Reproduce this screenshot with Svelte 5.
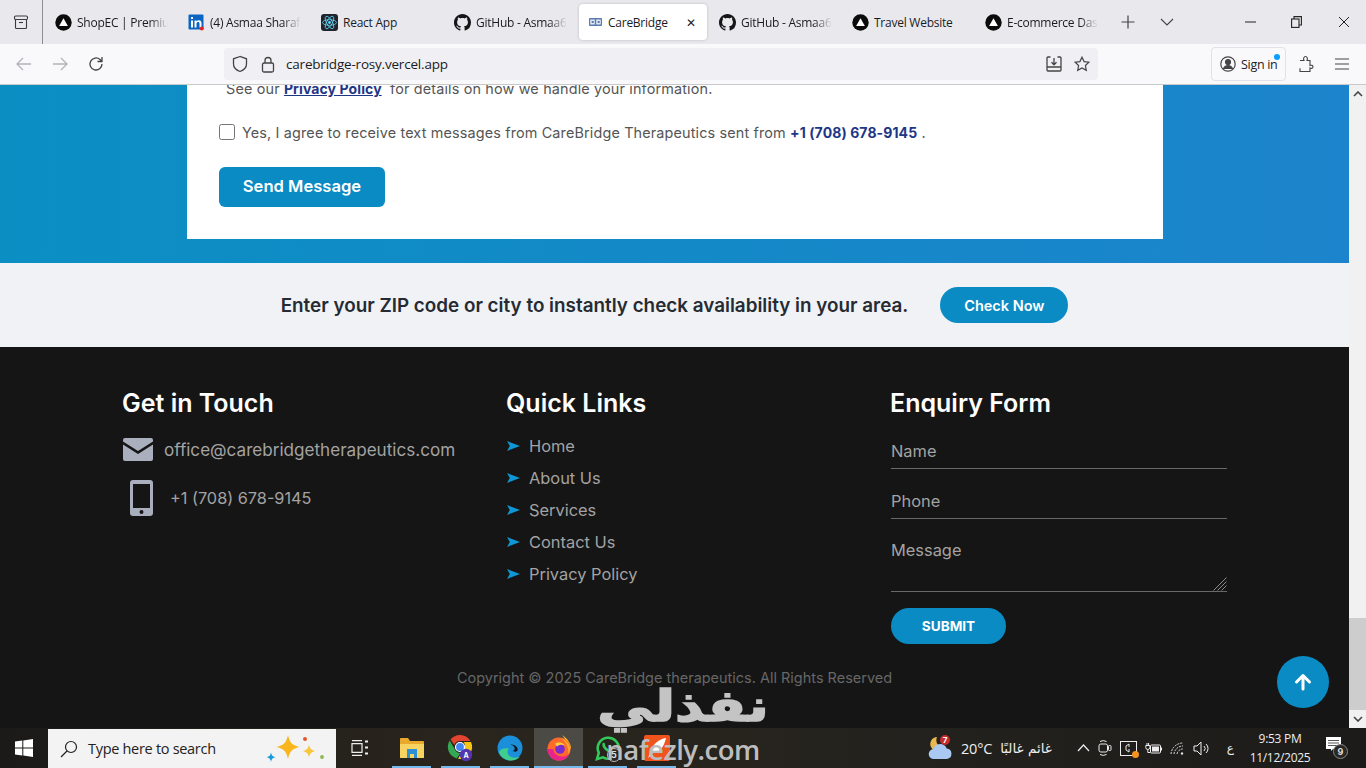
<script>
  const tabs = [
    { t: 'ShopEC | Premium', i: 'tri' },
    { t: '(4) Asmaa Sharaf', i: 'in' },
    { t: 'React App', i: 'react', nofade: true },
    { t: 'GitHub - Asmaa6', i: 'gh' },
    { t: 'CareBridge', i: 'cb', active: true, nofade: true },
    { t: 'GitHub - Asmaa6', i: 'gh' },
    { t: 'Travel Website', i: 'tri', nofade: true },
    { t: 'E-commerce Dash', i: 'tri' }
  ];
  const links = ['Home', 'About Us', 'Services', 'Contact Us', 'Privacy Policy'];
</script>

<div class="screen">
  <header class="tabbar">
    <div class="tabhome">
      <svg width="16" height="16" viewBox="0 0 16 16" fill="none" stroke="#3a3a3f" stroke-width="1.100"><path d="M2.500 5.500V13.500a1 1 0 0 0 1 1h9a1 1 0 0 0 1-1V5.500"/><rect x="1.500" y="2" width="13" height="3.500" rx="1.200"/><path d="M6 8.500h4"/></svg>
    </div>
    <div class="tabs">
      {#each tabs as tab}
        <div class="tab" class:active={tab.active}>
          <span class="favicon">
            {#if tab.i === 'tri'}
              <svg width="17" height="17" viewBox="0 0 17 17"><circle cx="8.500" cy="8.500" r="8.200" fill="#0b0b0b"/><path d="M8.500 4.300l4.400 7.600H4.100z" fill="#fff"/></svg>
            {:else if tab.i === 'in'}
              <svg width="17" height="17" viewBox="0 0 17 17"><rect x=".5" y=".5" width="15" height="15" rx="1" fill="#0a66c2"/><path d="M3 6.500h2v7H3zM3 3h2v2H3zM6.500 6.500h2v1c.5-.8 1.300-1.200 2.300-1.200 1.800 0 2.700 1.100 2.700 3v4.200h-2V9.700c0-1-.4-1.600-1.300-1.600-1 0-1.700.6-1.700 1.800v3.600h-2z" fill="#fff"/><circle cx="13.800" cy="14.500" r="2" fill="#e0252a"/></svg>
            {:else if tab.i === 'react'}
              <svg width="17" height="17" viewBox="0 0 17 17"><rect width="17" height="17" rx="3" fill="#20232a"/><g fill="none" stroke="#61dafb" stroke-width=".8"><ellipse cx="8.500" cy="8.500" rx="7" ry="2.800"/><ellipse cx="8.500" cy="8.500" rx="7" ry="2.800" transform="rotate(60 8.500 8.500)"/><ellipse cx="8.500" cy="8.500" rx="7" ry="2.800" transform="rotate(120 8.500 8.500)"/></g><circle cx="8.500" cy="8.500" r="1.400" fill="#61dafb"/></svg>
            {:else if tab.i === 'gh'}
              <svg width="17" height="17" viewBox="0 0 16 16"><path fill="#161616" d="M8 0C3.580 0 0 3.580 0 8c0 3.540 2.290 6.530 5.470 7.590.4.070.55-.17.55-.38 0-.19-.01-.82-.01-1.490-2.010.37-2.530-.49-2.690-.94-.09-.23-.48-.94-.82-1.130-.28-.15-.68-.52-.01-.53.63-.01 1.080.58 1.230.82.720 1.210 1.870.87 2.330.66.070-.52.280-.87.510-1.070-1.780-.2-3.640-.89-3.640-3.950 0-.87.310-1.590.820-2.150-.08-.2-.36-1.020.08-2.120 0 0 .67-.21 2.200.82.640-.18 1.320-.27 2-.27s1.360.09 2 .27c1.530-1.040 2.200-.82 2.200-.82.440 1.100.160 1.920.080 2.120.510.560.820 1.270.820 2.150 0 3.070-1.870 3.750-3.650 3.950.290.250.540.730.540 1.480 0 1.070-.01 1.930-.01 2.200 0 .210.150.460.550.380A8.010 8.010 0 0 0 16 8c0-4.420-3.580-8-8-8z"/></svg>
            {:else}
              <svg width="13" height="8" viewBox="0 0 13 8"><rect width="13" height="8" rx=".8" fill="#5b7cb2"/><rect x="1.200" y="1.500" width="4.600" height="5" fill="#dfe8f4"/><rect x="7.200" y="1.500" width="4.600" height="5" fill="#dfe8f4"/><rect x="2.700" y="3" width="2" height="2" fill="#5b7cb2"/><rect x="8.700" y="3" width="2" height="2" fill="#5b7cb2"/></svg>
            {/if}
          </span>
          <span class="tabtitle" class:fade={!tab.nofade}>{tab.t}</span>
          {#if tab.active}<span class="tabclose">✕</span>{/if}
        </div>
      {/each}
      <span class="newtab">
        <svg width="14" height="14" viewBox="0 0 14 14" stroke="#444" stroke-width="1.200"><path d="M7 .5v13M.5 7h13"/></svg>
      </span>
      <span class="tablist">
        <svg width="14" height="8" viewBox="0 0 14 8" fill="none" stroke="#444" stroke-width="1.100"><path d="M1 1l6 6 6-6"/></svg>
      </span>
    </div>
    <div class="winctl">
      <span><svg width="11" height="2" viewBox="0 0 11 2" stroke="#222"><path d="M0 1h11"/></svg></span>
      <span><svg width="11" height="12" viewBox="0 0 11 12" fill="none" stroke="#222" stroke-width="1.100"><rect x=".6" y="3" width="7.400" height="8.400"/><path d="M3 3V.6h7.400v8.400H8"/></svg></span>
      <span><svg width="12" height="12" viewBox="0 0 12 12" stroke="#222" stroke-width="1"><path d="M1 1l10 10M11 1L1 11"/></svg></span>
    </div>
  </header>

  <nav class="navbar">
    <div class="navbtns">
      <svg width="16" height="14" viewBox="0 0 16 14" fill="none" stroke="#b3b3b8" stroke-width="1.300"><path d="M15 7H1.500M7 1L1 7l6 6"/></svg>
      <svg width="16" height="14" viewBox="0 0 16 14" fill="none" stroke="#b3b3b8" stroke-width="1.300"><path d="M1 7h13.500M9 1l6 6-6 6"/></svg>
      <svg width="16" height="16" viewBox="0 0 16 16" fill="none" stroke="#444" stroke-width="1.300"><path d="M14 8a6 6 0 1 1-2-4.500L14 5.500M14 1v4.500H9.500"/></svg>
    </div>
    <div class="urlbar">
      <svg width="16" height="18" viewBox="0 0 16 18" fill="none" stroke="#444" stroke-width="1.300"><path d="M8 1.500L1.500 3.800V9c0 3.500 3 6.200 6.500 7.500 3.500-1.300 6.500-4 6.500-7.500V3.800z"/></svg>
      <svg class="lock" width="14" height="17" viewBox="0 0 14 17" fill="none" stroke="#444" stroke-width="1.300"><rect x="1.500" y="7" width="11" height="9" rx="1.500"/><path d="M4 7V4.500a3 3 0 0 1 6 0V7"/></svg>
      <span class="url">carebridge-rosy.vercel.app</span>
      <svg class="urlright" width="16" height="16" viewBox="0 0 16 16" fill="none" stroke="#444" stroke-width="1.300"><path d="M4.500 1H2a1 1 0 0 0-1 1v12a1 1 0 0 0 1 1h12a1 1 0 0 0 1-1V2a1 1 0 0 0-1-1h-2.500M1 11h14M8 2v6.500M5.500 6.300L8 8.800l2.500-2.500"/></svg>
      <svg class="star" width="16" height="16" viewBox="0 0 16 16" fill="none" stroke="#444" stroke-width="1.200"><path d="M8 1.200l2.100 4.400 4.800.6-3.500 3.300.9 4.800L8 12l-4.300 2.300.9-4.800L1.100 6.200l4.800-.6z"/></svg>
    </div>
    <div class="signin">
      <svg width="16" height="16" viewBox="0 0 16 16" fill="none" stroke="#444" stroke-width="1.200"><circle cx="8" cy="8" r="7.200"/><circle cx="8" cy="6" r="2.500" fill="#444"/><path d="M3.500 13c.8-2.500 2.500-3.300 4.500-3.300s3.700.8 4.500 3.300" fill="#444"/></svg>
      <span>Sign in</span>
      <i class="dot"></i>
    </div>
    <svg class="ext" width="15" height="18" viewBox="0 0 15 18" fill="none" stroke="#444" stroke-width="1.100"><path d="M1 5.500h4c-1-1.800-.2-4 1.500-4s2.500 2.200 1.500 4h3v5c1.500-.6 3-.2 3 1.300s-1.500 2-3 1.200v3.500H1v-3.300"/></svg>
    <svg class="burger" width="14" height="12" viewBox="0 0 14 12" stroke="#444" stroke-width="1.200"><path d="M0 1h14M0 6h14M0 11h14"/></svg>
  </nav>

  <div class="viewport">
    <main class="page">
      <section class="hero">
        <div class="card">
          <p class="consent">See our <a href="#top">Privacy Policy</a>&nbsp; for details on how we handle your information.</p>
          <label class="agree">
            <input type="checkbox" />
            <span>Yes, I agree to receive text messages from CareBridge Therapeutics sent from <b>+1 (708) 678-9145</b> .</span>
          </label>
          <button class="send">Send Message</button>
        </div>
      </section>

      <section class="zip">
        <h2>Enter your ZIP code or city to instantly check availability in your area.</h2>
        <button class="check">Check Now</button>
      </section>

      <footer class="footer">
        <div class="cols">
          <div>
            <h3>Get in Touch</h3>
            <div class="contact mail">
              <svg width="30" height="23" viewBox="0 0 30 23"><path fill="#a9afbd" d="M2 0h26a2 2 0 0 1 2 2v1.500L15 13 0 3.500V2a2 2 0 0 1 2-2zM0 6.500l15 9.500 15-9.500V21a2 2 0 0 1-2 2H2a2 2 0 0 1-2-2z"/></svg>
              <span>office@carebridgetherapeutics.com</span>
            </div>
            <div class="contact phone">
              <svg width="23" height="36" viewBox="0 0 23 36"><path fill="#a9afbd" fill-rule="evenodd" d="M3 0h17a3 3 0 0 1 3 3v30a3 3 0 0 1-3 3H3a3 3 0 0 1-3-3V3a3 3 0 0 1 3-3zm0 4v24h17V4zm8.500 26a2 2 0 1 0 0 4 2 2 0 0 0 0-4z"/></svg>
              <span>+1 (708) 678-9145</span>
            </div>
          </div>
          <div>
            <h3>Quick Links</h3>
            <ul class="links">
              {#each links as l}
                <li>
                  <svg width="13" height="10" viewBox="0 0 13 10"><path fill="#0e97d6" d="M0 0l13 5L0 10l2.800-5z"/></svg>
                  <span>{l}</span>
                </li>
              {/each}
            </ul>
          </div>
          <form class="enquiry">
            <h3>Enquiry Form</h3>
            <input placeholder="Name" />
            <input placeholder="Phone" />
            <div class="msgwrap">
              <textarea placeholder="Message"></textarea>
              <svg class="grip" width="14" height="14" viewBox="0 0 14 14" stroke="#9a9a9a" stroke-width=".9"><path d="M13.500 .5L.5 13.500M13.500 4.500L4.500 13.500M13.500 8.500L8.500 13.500"/></svg>
            </div>
            <button type="button" class="submit">SUBMIT</button>
          </form>
        </div>
        <p class="copy">Copyright © 2025 CareBridge therapeutics. All Rights Reserved</p>
      </footer>
    </main>
    <div class="scrollbar">
      <span class="sbtn"><svg width="10" height="6" viewBox="0 0 10 6" fill="none" stroke="#444" stroke-width="1.600"><path d="M1 5l4-4 4 4"/></svg></span>
      <span class="sthumb"></span>
      <span class="sbtn"><svg width="10" height="6" viewBox="0 0 10 6" fill="none" stroke="#444" stroke-width="1.600"><path d="M1 1l4 4 4-4"/></svg></span>
    </div>
    <button class="totop" aria-label="Back to top">
      <svg width="18" height="18" viewBox="0 0 18 18" fill="none" stroke="#fff" stroke-width="3" stroke-linecap="round" stroke-linejoin="round"><path d="M9 16V2.500M2.500 9L9 2.500 15.500 9"/></svg>
    </button>
  </div>

  <div class="taskbar">
    <span class="start">
      <svg width="18" height="18" viewBox="0 0 18 18" fill="#fff"><path d="M0 2.600l7.300-1v7H0zM8.300 1.400L18 0v8.600H8.300zM0 9.600h7.300v7l-7.300-1zM8.300 9.600H18V18l-9.700-1.400z"/></svg>
    </span>
    <div class="search">
      <svg width="18" height="18" viewBox="0 0 18 18" fill="none" stroke="#222" stroke-width="1.200"><circle cx="11" cy="7" r="5.500"/><path d="M7 11l-6 6"/></svg>
      <span>Type here to search</span>
      <svg class="sparkle" width="62" height="30" viewBox="0 0 62 30"><path fill="#f9b61c" d="M24 1c1.800 8 4.500 10.500 12 12-7.500 1.500-10.200 4-12 12-1.800-8-4.500-10.500-12-12 7.500-1.500 10.200-4 12-12z"/><path fill="#f9c53c" d="M45 10.500c.8 4 2.200 5.500 6 6.500-3.800 1-5.200 2.500-6 6.500-.8-4-2.200-5.500-6-6.500 3.800-1 5.200-2.500 6-6.500z"/><circle cx="41" cy="5" r="2" fill="#e0592a"/><circle cx="58" cy="23" r="1.900" fill="#8ab84a"/><path fill="#1a9bdc" d="M7 18.500c.5 2.900 1.600 4 4.400 4.700-2.800.7-3.900 1.800-4.400 4.700-.5-2.900-1.600-4-4.400-4.700 2.800-.7 3.900-1.800 4.400-4.700z"/></svg>
    </div>
    <span class="taskview">
      <svg width="18" height="16" viewBox="0 0 18 16" fill="none" stroke="#eee" stroke-width="1.200"><path d="M1 .6h10M1 15.400h10M1 3.600h10v8.800H1z"/><path d="M14 1.500h3M14 7.500h3M14 13.500h3" stroke-width="2"/></svg>
    </span>
    <div class="apps">
      <span class="app running">
        <svg width="24" height="22" viewBox="0 0 24 22"><path fill="#e8a92c" d="M0 2a1 1 0 0 1 1-1h7l2 3h13a1 1 0 0 1 1 1v15a1 1 0 0 1-1 1H1a1 1 0 0 1-1-1z"/><path fill="#f7d460" d="M0 7h24v13a1 1 0 0 1-1 1H1a1 1 0 0 1-1-1z"/><path fill="#2d8fd5" d="M7 12h10v9h-3v-4h-4v4H7z"/></svg>
      </span>
      <span class="app running">
        <svg width="28" height="28" viewBox="0 0 28 28"><path fill="#e2452f" d="M13 1a12 12 0 0 1 10.400 6H13a6 6 0 0 0-5.700 4L3.500 5.500A12 12 0 0 1 13 1z"/><path fill="#34a853" d="M2.700 6.500l5.200 9a6 6 0 0 0 5.500 3.500L9.700 24.500A12 12 0 0 1 2.700 6.500z"/><path fill="#f9c513" d="M24 8a12 12 0 0 1-13 16.800l5.200-9A6 6 0 0 0 16.500 8z"/><circle cx="13" cy="13" r="4.500" fill="#4285f4" stroke="#fff" stroke-width="1.200"/><circle cx="19" cy="21" r="6.200" fill="#5236ab"/><text x="19" y="24" text-anchor="middle" class="badge-a">A</text></svg>
      </span>
      <span class="app running">
        <svg width="26" height="26" viewBox="0 0 26 26"><circle cx="13" cy="13" r="12.500" fill="#1b8fd9"/><path fill="#3fce8e" d="M2 17c2 6 7 8.500 12 8.500 4 0 7-1.500 9-4-3 1.500-8 2-11-1-2-2-2-5 0-7-5-1-9 .5-10 3.500z"/><path fill="#131517" d="M13.500 9.500c4 0 7.200 2.200 7.200 5 0 1.300-1 2.200-2.500 2.200-1 0-2-.4-2.500-.9 3 0 3-5-2.200-6.300z"/></svg>
      </span>
      <span class="app running current">
        <svg width="26" height="26" viewBox="0 0 26 26"><path fill="#ffbd2e" d="M16 0c5 3 9.500 8.500 9 15-1-3-3-5-5-6.500.3-3-1.700-6-4-8.500z"/><circle cx="13" cy="14" r="11.500" fill="#ff6a2a"/><path fill="#ffa92b" d="M15 3c5 2 9 6 9 11 0 2-.6 4-1.700 5.500C23 12 20 7 15 3z"/><path fill="#e8238a" d="M1.600 14c0 7 5.400 11.500 11.400 11.500 4.600 0 8.500-2.500 10.300-6.500-3 2.600-7.300 3.300-11 1.800-3-1.300-5-3.800-5-6.800z"/><circle cx="14" cy="14" r="4.800" fill="#7a2bd0"/><path fill="#ffcf3a" d="M9 9c3-2.500 8-1.500 10 1.500-3-1.300-6-1-8 1z"/></svg>
      </span>
      <span class="app running">
        <svg width="28" height="28" viewBox="0 0 28 28" fill="none" stroke="#33c95a" stroke-width="2.600"><path d="M3 25l1.800-6.200A10.500 10.500 0 1 1 9 23.300z"/><path d="M10 9c-1 2 0 4 2 6s4 3 6 2" stroke-width="2.600"/></svg>
        <i class="appbadge">5</i>
      </span>
      <span class="app running">
        <svg width="26" height="26" viewBox="0 0 26 26"><rect width="26" height="26" rx="2" fill="#f0531c"/><path fill="#fff" d="M22 3c-7 1-13 6-15 13l-3 7 5-5c7-1 11-6 13-15z"/></svg>
      </span>
    </div>
    <div class="tray">
      <span class="weather">
        <svg width="26" height="26" viewBox="0 0 26 26"><path fill="#e9b94f" d="M9 2a7 7 0 1 0 6 11A8 8 0 0 1 9 2z"/><path fill="#a9c8f2" d="M6 24a5 5 0 0 1-.6-10 7 7 0 0 1 13.300-.5A5.300 5.300 0 0 1 19 24z"/><circle cx="17" cy="5" r="5" fill="#c42b2b"/><text x="17" y="8" text-anchor="middle" class="badge-7">7</text></svg>
        <b>20°C</b>
        <span class="ar" dir="rtl">غائم غالبًا</span>
      </span>
      <svg class="caret" width="13" height="8" viewBox="0 0 13 8" fill="none" stroke="#eee" stroke-width="1.200"><path d="M1 7l5.500-6L12 7"/></svg>
      <svg width="14" height="18" viewBox="0 0 14 18" fill="none" stroke="#eee" stroke-width="1"><rect x="1" y="5" width="8.500" height="8" rx="1.800"/><rect x="10.500" y="6.500" width="2.500" height="5" rx=".8"/><path d="M2 2.500q3.200-1.800 6.500 0M2 15.500q3.200 1.800 6.500 0"/></svg>
      <span class="pic">
        <svg width="17" height="15" viewBox="0 0 17 15" fill="none" stroke="#eee" stroke-width="1"><rect x=".5" y=".5" width="16" height="14"/><path d="M6 5l3-2M9 3v3M6 5v4M6 9l3 2M9 11V8"/></svg>
        <i></i>
      </span>
      <svg width="17" height="13" viewBox="0 0 17 13" fill="none" stroke="#eee" stroke-width="1"><rect x="5.500" y="3" width="10" height="8" rx="1"/><path d="M16.500 5.500v3" /><path d="M.8 3.500h4v2a2 2 0 0 1-4 0zM2 1v2.500M3.600 1v2.500M2.800 7.500v3h2.500"/><rect x="7" y="4.500" width="7" height="5" fill="#eee" stroke="none"/></svg>
      <svg width="15" height="13" viewBox="0 0 15 13" fill="none" stroke="#ddd" stroke-width="1"><path d="M1 12A12 12 0 0 1 13 1M4 12a9 9 0 0 1 9-8M7 12a6 6 0 0 1 6-5" stroke-dasharray="2 1"/><circle cx="12" cy="11.500" r="1.200" fill="#ddd" stroke="none"/></svg>
      <svg width="17" height="15" viewBox="0 0 17 15" fill="none" stroke="#eee" stroke-width="1"><path d="M1 5v5h3l4 4V1L4 5zM11 5a3.500 3.500 0 0 1 0 5M13 3a6 6 0 0 1 0 9"/></svg>
      <span class="lang">ع</span>
      <span class="clock"><span>9:53 PM</span><span>11/12/2025</span></span>
      <span class="notif">
        <svg width="15" height="14" viewBox="0 0 15 14"><path fill="#fff" d="M0 0h15v12H7l-2 2v-2H0z"/><path stroke="#555" stroke-width="1" d="M2 3.500h11M2 6h11M2 8.500h11"/></svg>
        <i>9</i>
      </span>
    </div>
  </div>

  <div class="watermark">
    <span class="wm-ar" dir="rtl">نفذلي</span>
    <span class="wm-en">nafezly.com</span>
  </div>
</div>

<style>
  :global(body) { margin: 0; background: #151515; }
  .screen {
    position: relative;
    width: 1366px;
    height: 768px;
    overflow: hidden;
    display: flex;
    flex-direction: column;
    font-family: "Inter", "Open Sans", sans-serif;
  }
  svg { display: block; flex: none; }

  /* tab strip */
  .tabbar {
    height: 44px;
    flex: none;
    display: flex;
    align-items: center;
    background: #e9e9ed;
    font-family: "Open Sans", "Noto Sans", sans-serif;
    color: #1b1b1f;
  }
  .tabhome {
    width: 43px;
    height: 44px;
    flex: none;
    display: flex;
    align-items: center;
    justify-content: center;
    border-right: 1px solid #8d8d92;
    box-sizing: border-box;
  }
  .tabs { display: flex; align-items: center; padding-left: 2px; flex: 1; }
  .tab {
    width: 133px;
    height: 36px;
    flex: none;
    box-sizing: border-box;
    padding: 0 10px;
    display: flex;
    align-items: center;
    gap: 5px;
    font-size: 12px;
    letter-spacing: -0.25px;
    position: relative;
  }
  .tab.active {
    width: 128px;
    margin: 0 2px 0 2px;
    background: #fff;
    border-radius: 4px;
    box-shadow: 0 0 3px rgba(0,0,0,.2);
  }
  .favicon { display: flex; flex: none; width: 17px; justify-content: center; }
  .tab.active .favicon { width: 13px; margin-right: 1px; }
  .tabtitle { white-space: nowrap; overflow: hidden; flex: 1; }
  .fade { mask-image: linear-gradient(90deg, #000 80%, transparent); }
  .tabclose { font-size: 12px; margin-right: 1px; color: #222; }
  .newtab { margin-left: 13px; }
  .tablist { margin-left: 25px; }
  .winctl { display: flex; align-items: center; flex: none; }
  .winctl span { width: 40px; display: flex; justify-content: center; }
  .winctl span:nth-child(2) { width: 52px; }
  .winctl span:last-child { width: 44px; }

  /* nav bar */
  .navbar {
    height: 41px;
    flex: none;
    box-sizing: border-box;
    display: flex;
    align-items: center;
    background: #f9f9fb;
    border-bottom: 1px solid #c9c9cc;
    padding-left: 16px;
    font-family: "Open Sans", "Noto Sans", sans-serif;
  }
  .navbtns { display: flex; align-items: center; gap: 20px; width: 208px; flex: none; }
  .urlbar {
    width: 874px;
    height: 32px;
    flex: none;
    box-sizing: border-box;
    background: #f0f0f4;
    border-radius: 4px;
    display: flex;
    align-items: center;
    padding: 0 8px;
  }
  .lock { margin-left: 13px; }
  .url { margin-left: 11px; font-size: 13.500px; letter-spacing: -0.2px; color: #1b1b1f; flex: 1; }
  .star { margin-left: 12px; }
  .signin {
    position: relative;
    margin-left: 113px;
    width: 75px;
    height: 34px;
    box-sizing: border-box;
    border: 1px solid #e2e2e6;
    border-radius: 4px;
    display: flex;
    align-items: center;
    gap: 5px;
    padding-left: 8px;
    font-size: 12.500px;
    letter-spacing: -0.3px;
    color: #222;
  }
  .dot {
    position: absolute;
    top: 6px;
    right: 5px;
    width: 6px;
    height: 6px;
    border-radius: 50%;
    background: #0a9dff;
  }
  .ext { margin-left: 13px; }
  .burger { margin-left: 21px; }

  /* page */
  .viewport { position: relative; flex: 1; min-height: 0; display: flex; }
  .page { width: 1349px; flex: none; overflow: hidden; display: flex; flex-direction: column; }
  .hero {
    height: 178px;
    flex: none;
    box-sizing: border-box;
    padding: 0 186px 0 187px;
    background: linear-gradient(90deg, #0b8fc3, #1c84cc);
  }
  .card {
    background: #fff;
    height: 154px;
    box-sizing: border-box;
    padding: 0 32px;
    overflow: hidden;
  }
  .consent {
    margin: -8px 0 0;
    padding-left: 7px;
    height: 24px;
    line-height: 24px;
    font-size: 14.400px;
    letter-spacing: 0.16px;
    color: #555;
    white-space: nowrap;
  }
  .consent a { color: #1f3687; font-weight: 700; font-size: 14px; letter-spacing: 0.1px; }
  .agree {
    display: flex;
    align-items: center;
    gap: 7px;
    margin-top: 19px;
    height: 24px;
    font-size: 14.400px;
    letter-spacing: 0.15px;
    color: #555;
    white-space: nowrap;
  }
  .agree b { color: #1f3687; font-weight: 700; font-size: 14px; letter-spacing: 0.1px; }
  .agree input { width: 16px; height: 16px; margin: 0; flex: none; }
  .send {
    display: block;
    margin-top: 23px;
    width: 166px;
    height: 40px;
    padding: 0 0 2px;
    border: 0;
    border-radius: 6px;
    background: #0a8bc4;
    color: #fff;
    font: 600 16.600px "Inter", sans-serif;
  }

  .zip {
    height: 84px;
    flex: none;
    display: flex;
    align-items: center;
    justify-content: center;
    gap: 32px;
    background: #f0f2f5;
  }
  .zip h2 { margin: 0; font-size: 18.850px; font-weight: 600; color: #262b33; white-space: nowrap; }
  .check {
    width: 128px;
    height: 36px;
    border: 0;
    border-radius: 18px;
    background: #0a8bc4;
    color: #fff;
    font: 600 14.500px "Inter", sans-serif;
  }

  .footer { flex: 1; min-height: 0; background: #151515; padding: 39px 0 0 122px; }
  .cols { display: grid; grid-template-columns: repeat(3, 384px); align-items: start; }
  h3 {
    margin: 0;
    height: 34px;
    line-height: 34px;
    font-size: 25px;
    font-weight: 600;
    color: #fff;
  }
  .contact { display: flex; align-items: center; color: #a3a3a3; }
  .contact.mail { margin: 17px 0 0 1px; gap: 11px; height: 24px; font-size: 17.100px; }
  .contact.phone { margin: 19px 0 0 8px; gap: 17px; height: 36px; font-size: 16.300px; }
  .links { list-style: none; margin: 10px 0 0; padding: 0; }
  .links li {
    height: 32px;
    display: flex;
    align-items: center;
    gap: 9px;
    padding-left: 1px;
    font-size: 16.400px;
    color: #a3a3a3;
  }
  .enquiry { display: flex; flex-direction: column; width: 337px; }
  .enquiry input, .enquiry textarea {
    display: block;
    width: 336px;
    box-sizing: border-box;
    margin-left: 1px;
    background: transparent;
    border: 0;
    border-bottom: 1px solid #686868;
    outline: 0;
    padding: 0;
    font: 16.400px "Inter", sans-serif;
    color: #a3a3a3;
  }
  .enquiry input { height: 34px; margin-top: 15px; padding-bottom: 2px; }
  .enquiry input::placeholder, .enquiry textarea::placeholder { color: #a3a3a3; opacity: 1; }
  .enquiry input + input { margin-top: 16px; }
  .msgwrap { position: relative; margin-top: 17px; height: 56px; }
  .enquiry textarea { height: 56px; padding-top: 3px; resize: none; line-height: 22px; }
  .grip { position: absolute; right: 0; bottom: 1px; }
  .submit {
    margin: 16px 0 0 1px;
    width: 115px;
    height: 36px;
    border: 0;
    border-radius: 18px;
    background: #0a8bc4;
    color: #fff;
    font: 700 13.600px "Inter", sans-serif;
  }
  .copy {
    margin: 25px 0 0 -122px;
    width: 1349px;
    text-align: center;
    font-size: 14.470px;
    color: #676767;
  }

  .scrollbar {
    width: 17px;
    flex: none;
    display: flex;
    flex-direction: column;
    background: #f1f1f1;
  }
  .sbtn { height: 18px; flex: none; display: flex; align-items: center; justify-content: center; }
  .sthumb { margin-top: auto; height: 92px; background: #cdcdcd; }
  .totop {
    position: absolute;
    left: 1277px;
    top: 571px;
    width: 52px;
    height: 52px;
    padding: 0;
    border: 0;
    border-radius: 50%;
    background: #0a8bc4;
    display: flex;
    align-items: center;
    justify-content: center;
  }

  /* taskbar */
  .taskbar {
    height: 40px;
    flex: none;
    display: flex;
    align-items: center;
    background: linear-gradient(90deg, #1b1a18, #2a251d 35%, #25231e 60%, #1c1b19);
    color: #eee;
    font-family: "Open Sans", "Noto Sans", sans-serif;
  }
  .start { width: 48px; flex: none; display: flex; justify-content: center; }
  .search {
    width: 288px;
    height: 39px;
    margin-top: 1px;
    flex: none;
    box-sizing: border-box;
    background: #f3f3f3;
    display: flex;
    align-items: center;
    padding-left: 12px;
    gap: 10px;
    color: #222;
    font-size: 14.500px;
    letter-spacing: -0.3px;
  }
  .sparkle { margin-left: auto; margin-right: 10px; }
  .taskview { width: 48px; flex: none; display: flex; justify-content: center; }
  .apps { display: flex; margin-left: 3px; height: 40px; }
  .app {
    width: 49px;
    height: 40px;
    flex: none;
    position: relative;
    display: flex;
    align-items: center;
    justify-content: center;
  }
  .app.current { background: #4b4a45; }
  .running::after {
    content: "";
    position: absolute;
    left: 5px;
    right: 5px;
    bottom: 0;
    height: 2px;
    background: #76b9ed;
  }
  .current::after { left: 0; right: 0; }
  .appbadge {
    position: absolute;
    left: 24px;
    top: 20px;
    width: 14px;
    height: 14px;
    box-sizing: border-box;
    border: 1px solid #bbb;
    border-radius: 50%;
    background: #2a2520;
    font: 700 9px/12px "Inter", sans-serif;
    text-align: center;
    color: #ddd;
  }
  .tray {
    margin-left: auto;
    display: flex;
    align-items: center;
    gap: 8px;
    height: 40px;
    padding-right: 4px;
    font-size: 13px;
  }
  .weather { display: flex; align-items: center; gap: 7px; margin-right: 17px; }
  .weather b { font-weight: 400; font-size: 14.500px; letter-spacing: -0.2px; }
  .ar { font-family: "DejaVu Sans", sans-serif; font-size: 13.500px; margin-left: 1px; }
  .badge-a { font: 700 7px "Inter", sans-serif; fill: #fff; }
  .badge-7 { font: 700 8px "Inter", sans-serif; fill: #fff; }
  .pic { position: relative; display: block; }
  .pic i {
    position: absolute;
    right: -2px;
    bottom: -2px;
    width: 7px;
    height: 7px;
    border-radius: 50%;
    background: #f7941d;
  }
  .lang { font-family: "DejaVu Sans", sans-serif; margin-left: 9px; font-size: 12px; }
  .clock {
    display: flex;
    flex-direction: column;
    align-items: center;
    width: 72px;
    margin-left: 2px;
    font-size: 12px;
    letter-spacing: -0.3px;
    line-height: 19px;
  }
  .notif { position: relative; display: block; width: 22px; height: 26px; margin-left: 2px; margin-right: 14px; }
  .notif svg { margin: 2px 0 0 0; }
  .notif i {
    position: absolute;
    left: 7px;
    top: 9px;
    width: 15px;
    height: 15px;
    box-sizing: border-box;
    border: 1px solid #888;
    border-radius: 50%;
    background: #2a2824;
    font: 700 9px/13px "Inter", sans-serif;
    text-align: center;
    color: #ddd;
  }

  .watermark {
    position: absolute;
    left: 593px;
    top: 666px;
    width: 180px;
    height: 102px;
    display: flex;
    flex-direction: column;
    align-items: center;
    color: #c4c4c4;
    pointer-events: none;
    font-family: "DejaVu Sans", sans-serif;
    font-weight: 700;
    line-height: 1;
  }
  .wm-ar {
    font-size: 56px;
    height: 68px;
    line-height: 68px;
    -webkit-text-stroke: 2px #c4c4c4;
    transform: translateY(6px) scaleY(0.78);
  }
  .wm-en { font-family: "Open Sans", sans-serif; font-weight: 600; font-size: 27.500px; letter-spacing: -0.5px; color: #bdbdbd; line-height: 32px; }
</style>
